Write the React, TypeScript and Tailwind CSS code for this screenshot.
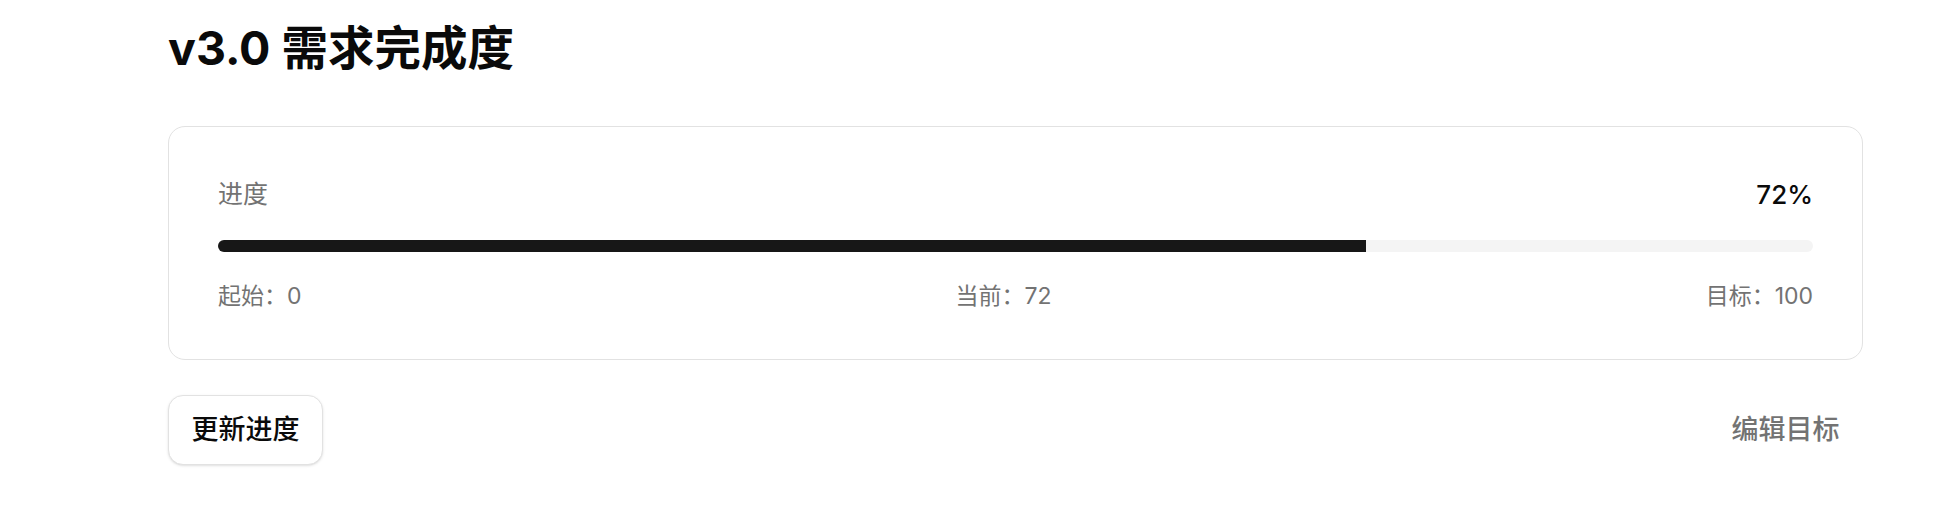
export default function App() {
  const start = 0;
  const current = 72;
  const target = 100;
  const pct = Math.round(((current - start) / (target - start)) * 100);

  return (
    <div
      className="min-h-[530px] w-full bg-white text-[#0a0a0a]"
      style={{ fontFamily: '"Inter", "Noto Sans CJK SC", sans-serif' }}
    >
      <div className="ml-[168px] w-[1695px] pt-[21px]">
        <h1 className="text-[46.5px] leading-[54px] font-bold">v3.0 需求完成度</h1>

        <div className="mt-[51px] h-[234px] rounded-[17px] border border-[#e2e2e2] bg-white px-[49px] pt-[50px]">
          <div className="flex items-center justify-between leading-[35px]">
            <span className="text-[25px] text-[#737373]">进度</span>
            <span className="text-[26px] font-medium">{pct}%</span>
          </div>

          <div className="mt-[28px] h-[12px] w-full overflow-hidden rounded-full bg-[#f4f4f4]">
            <div className="h-full bg-[#171717]" style={{ width: `${pct}%` }} />
          </div>

          <div className="mt-[28px] flex items-center justify-between text-[23px] leading-[32px] text-[#737373]">
            <span>起始：{start}</span>
            <span>当前：{current}</span>
            <span>目标：{target}</span>
          </div>
        </div>

        <div className="mt-[35px] flex items-center justify-between">
          <button className="h-[70px] w-[155px] rounded-[15px] border border-[#e2e2e2] bg-white text-[27px] font-medium text-[#0a0a0a] shadow-sm">
            更新进度
          </button>
          <button className="h-[70px] w-[155px] rounded-[15px] text-[27px] font-medium text-[#737373]">
            编辑目标
          </button>
        </div>
      </div>
    </div>
  );
}
